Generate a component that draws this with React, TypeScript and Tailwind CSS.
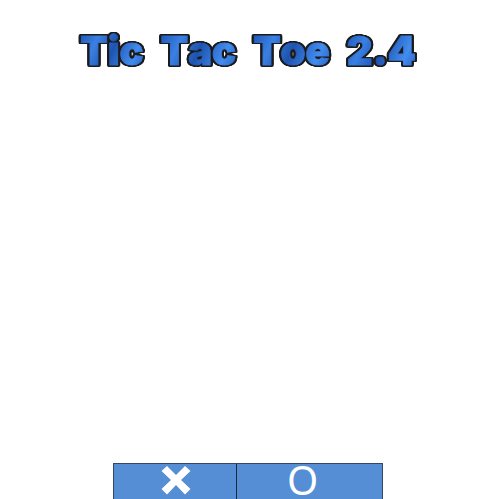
import React from "react";

const titleWords = ["Tic", "Tac", "Toe", "2.4"];

function CrossIcon() {
  return (
    <svg viewBox="0 0 30 30" className="h-[30px] w-[30px]" aria-hidden="true">
      <path
        d="M6 1 L15 10 L24 1 L29.5 6 L20 15 L29.5 24 L24 29.5 L15 20 L6 29.5 L0.5 24 L10 15 L0.5 6 Z"
        fill="#ffffff"
      />
    </svg>
  );
}

export default function App() {
  return (
    <main className="flex min-h-screen flex-col items-center justify-between overflow-hidden bg-white pr-1">
      <h1 className="mt-[31px] flex gap-[17px] font-['Inter',sans-serif] text-[40px] leading-10 font-black [font-kerning:none] text-transparent [filter:drop-shadow(1px_0_0_#1c1c1c)_drop-shadow(-1px_0_0_#1c1c1c)_drop-shadow(0_1px_0_#1c1c1c)_drop-shadow(0_-1px_0_#1c1c1c)_drop-shadow(1px_0_0_#1c1c1c)_drop-shadow(-1px_0_0_#1c1c1c)]">
        {titleWords.map((word) => (
          <span
            key={word}
            className="bg-[linear-gradient(115deg,#1d55b4_0%,#3a80e4_25%,#1e54b0_50%,#428cf0_80%,#2560c0_100%)] bg-clip-text [-webkit-text-stroke:1px_transparent]"
          >
            {word}
          </span>
        ))}
      </h1>
      <div className="grid h-9 w-[270px] grid-cols-[123px_1fr] border-x border-t border-[#33475f] bg-[#558ed5]">
        <button
          type="button"
          aria-label="Play as X"
          className="flex items-start justify-center border-r border-[#14283f] pt-px pl-[2px]"
        >
          <CrossIcon />
        </button>
        <button
          type="button"
          className="flex items-start justify-center pr-[14px] font-['Noto_Sans',sans-serif] text-[40px] leading-8 text-white"
        >
          O
        </button>
      </div>
    </main>
  );
}
